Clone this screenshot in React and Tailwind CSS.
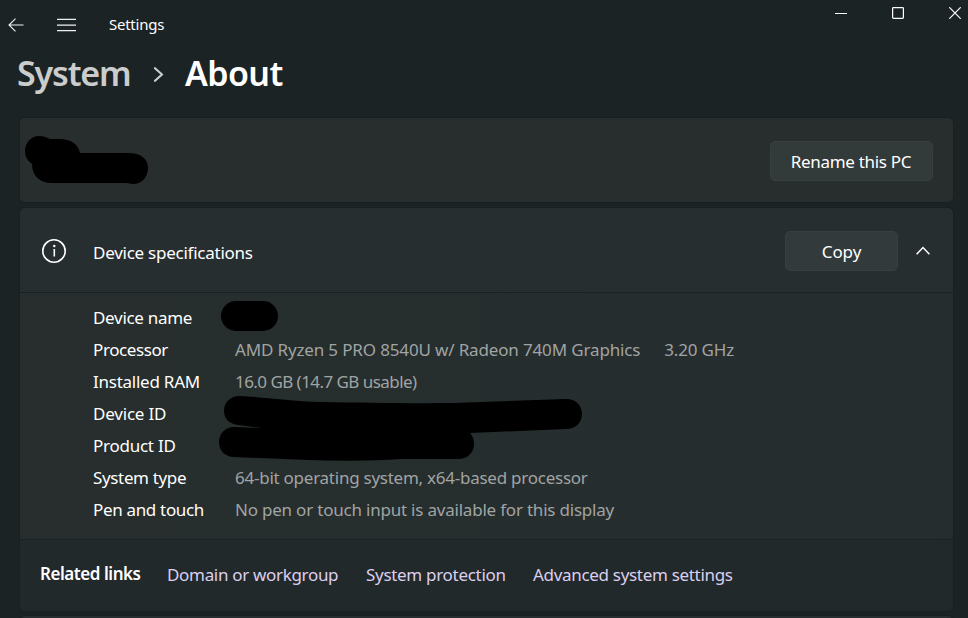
import React from "react";

const specs = [
  { label: "Device name", spacing: "tracking-[-0.3px]" },
  {
    label: "Processor",
    spacing: "tracking-[-0.4px]",
    value: "AMD Ryzen 5 PRO 8540U w/ Radeon 740M Graphics",
    valueSpacing: "tracking-[-0.15px]",
    extra: "3.20 GHz",
  },
  {
    label: "Installed RAM",
    spacing: "tracking-[-0.25px]",
    value: "16.0 GB (14.7 GB usable)",
    valueSpacing: "tracking-[-0.55px]",
  },
  { label: "Device ID", spacing: "tracking-[-0.2px]" },
  { label: "Product ID", spacing: "tracking-[-0.25px]" },
  {
    label: "System type",
    spacing: "tracking-[-0.35px]",
    value: "64-bit operating system, x64-based processor",
    valueSpacing: "tracking-[-0.25px]",
  },
  {
    label: "Pen and touch",
    spacing: "tracking-[-0.33px]",
    value: "No pen or touch input is available for this display",
    valueSpacing: "tracking-[-0.21px]",
  },
];

function TitleBar() {
  return (
    <header className="flex h-[50px] items-start justify-between">
      <div className="flex h-[50px] items-center pl-2 text-[#f0f2f2]">
        <svg width="16" height="14" viewBox="0 0 16 14" fill="none" stroke="currentColor" strokeWidth="1.100">
          <path d="M15.500 7H1M7.500 .7L1 7l6.500 6.300" />
        </svg>
        <svg className="ml-[33px]" width="19" height="14" viewBox="0 0 19 14" fill="none" stroke="currentColor" strokeWidth="1.200">
          <path d="M0 1.400h19M0 7.200h19M0 12.600h19" />
        </svg>
        <span className="mb-[2px] ml-[33px] text-[15px] tracking-[-0.25px] text-white">Settings</span>
      </div>
      <div className="flex items-center pr-[7px] pt-[7px] text-white">
        <svg width="12" height="12" viewBox="0 0 12 12" stroke="currentColor">
          <path d="M0 6.500h12" />
        </svg>
        <svg className="ml-[45px]" width="12" height="12" viewBox="0 0 12 12" fill="none" stroke="currentColor" strokeWidth="1.200">
          <rect x=".6" y=".6" width="10.800" height="10.800" rx=".8" />
        </svg>
        <svg className="ml-[45px]" width="12" height="12" viewBox="0 0 12 12" stroke="currentColor" strokeWidth="1.200">
          <path d="M.3 .3l11.400 11.400M11.700 .3L.3 11.700" />
        </svg>
      </div>
    </header>
  );
}

function Breadcrumb() {
  return (
    <h1 className="flex h-[68px] items-start pl-[17px] text-[34px] font-semibold leading-[46px]">
      <span className="w-[135px] tracking-[-1.15px] text-[#cbcdcd]">System</span>
      <svg className="mt-[17px]" width="12" height="15" viewBox="0 0 12 15" fill="none" stroke="#cbcdcd" strokeWidth="2.200" strokeLinecap="round" strokeLinejoin="round">
        <path d="M3 1.200L10 7.500l-7 6.300" />
      </svg>
      <span className="ml-[21px] tracking-[-0.6px] text-white">About</span>
    </h1>
  );
}

export default function App() {
  return (
    <div
      className="h-[618px] w-[968px] overflow-hidden bg-[#1c2324] text-[17px] text-white"
      style={{ fontFamily: '"Noto Sans", "Open Sans", sans-serif' }}
    >
      <TitleBar />
      <Breadcrumb />
      <main className="flex w-[953px] flex-col gap-1.5 pl-5">
        <section className="relative flex h-[84px] items-center justify-end rounded-[5px] bg-[#272e2d] pr-5 pt-0.5 shadow-[0_0_0_1px_#1a2021]">
          <svg className="absolute left-0 top-0" width="140" height="84" viewBox="20 118 140 84">
            <path d="M39 136c4 0 7 1 11 3h9c12 0 19 5 21 14h48c13 0 20 6 20 15s-6 16-15 16l-7-1H52c-12 0-20-7-20-19-4-3-7-7-7-13 0-8 6-15 14-15z" />
          </svg>
          <button className="h-10 w-[163px] rounded-[5px] border border-[#383f3f] bg-[#333a3a] pr-px pt-0.5 tracking-[-0.3px]">
            Rename this PC
          </button>
        </section>

        <section className="rounded-[5px] bg-[#272e30] shadow-[0_0_0_1px_#1a2021]">
          <div className="flex h-[84px] items-center">
            <svg className="ml-[21px] mt-px" width="26" height="26" viewBox="0 0 26 26" fill="none" stroke="white" strokeWidth="1.600">
              <circle cx="13" cy="13" r="11.200" />
              <path d="M13.300 11v7.500" />
              <circle cx="13.300" cy="8" r="1.200" fill="white" stroke="none" />
            </svg>
            <h2 className="ml-[26px] mt-[5px] tracking-[-0.25px]">Device specifications</h2>
            <button className="ml-auto mt-[2px] h-10 w-[113px] rounded-[5px] border border-[#383f40] bg-[#333a3c] pt-0.5 tracking-[-0.1px]">
              Copy
            </button>
            <svg className="ml-[18px] mr-[23px]" width="14" height="9" viewBox="0 0 14 9" fill="none" stroke="white" strokeWidth="1.500">
              <path d="M.6 8.200L7 1.500l6.400 6.700" />
            </svg>
          </div>

          <div className="relative h-[248px] border-y border-[#1b2122] bg-linear-to-r from-[#272e2d] to-[#262d2f] pl-[73px] pt-[9px]">
            <dl>
              {specs.map((s) => (
                <div key={s.label} className="flex h-8 items-center whitespace-nowrap">
                  <dt className={`w-[142px] ${s.spacing}`}>{s.label}</dt>
                  <dd className={`text-[#a0a4a4] ${s.valueSpacing || ""}`}>{s.value}</dd>
                  {s.extra && <dd className="ml-6 tracking-[-0.18px] text-[#a0a4a4]">{s.extra}</dd>}
                </div>
              ))}
            </dl>
            <svg className="absolute left-[190px] top-0" width="400" height="180" viewBox="210 293 400 180">
              <rect x="221" y="301" width="57" height="30" rx="15" />
              <path d="M239 396c24 1 49 5 82 6 58 1 120 2 160 0l84-3c10-1 17 6 17 15s-7 15-16 15l-96 4c3 3 4 7 4 11 0 9-7 15-16 15l-57 0c-53 4-112 0-168-2-9-1-14-7-14-15s6-15 15-15l28 1-24-3c-8-1-14-6-14-14s6-15 15-15z" />
            </svg>
          </div>

          <div className="flex h-[71px] items-center whitespace-nowrap rounded-b-[5px] bg-[#22292a] pb-0.5 pl-5 text-[#dccff0]">
            <span className="mb-px w-[127px] font-semibold tracking-[-0.45px] text-white">Related links</span>
            <a className="w-[199px] tracking-[-0.32px]">Domain or workgroup</a>
            <a className="w-[167px] tracking-[-0.3px]">System protection</a>
            <a className="tracking-[-0.31px]">Advanced system settings</a>
          </div>
        </section>

        <section className="-mt-px h-10 rounded-[5px] bg-[#272e30] shadow-[0_0_0_1px_#1a2021]" />
      </main>
    </div>
  );
}
